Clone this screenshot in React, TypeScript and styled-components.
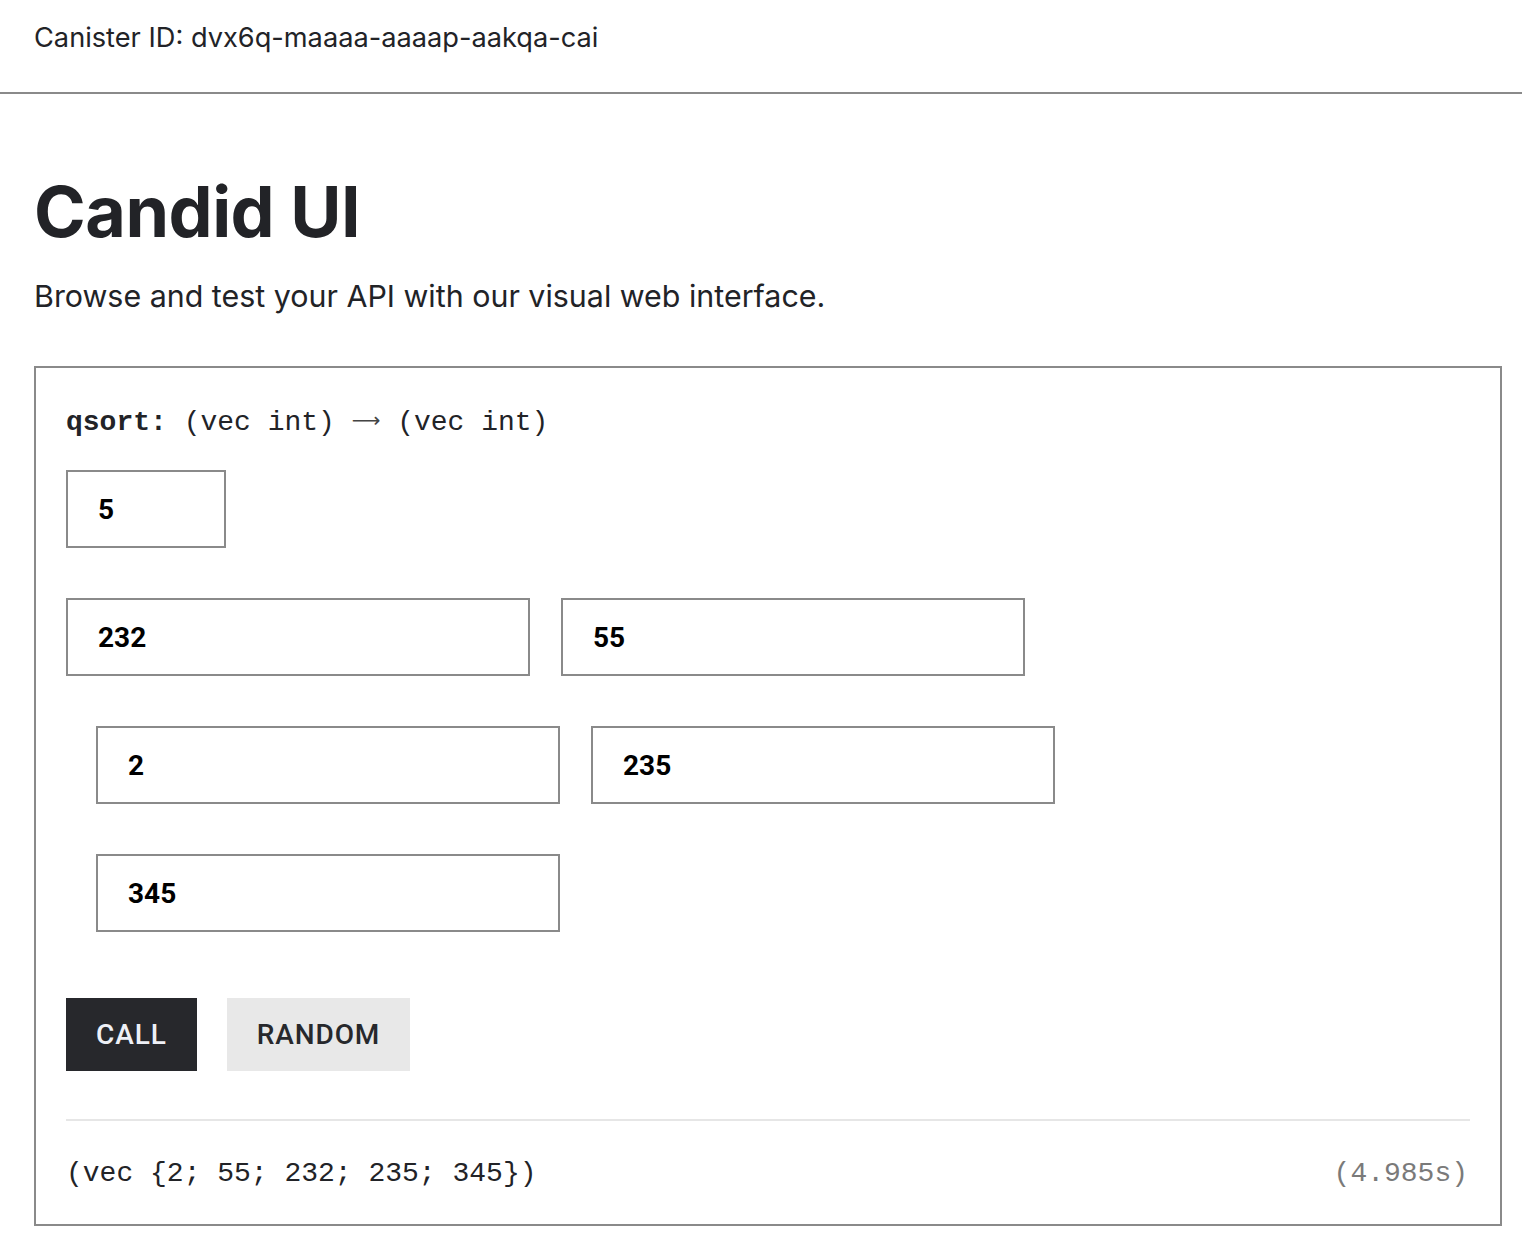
import React from "react";
import styled, { createGlobalStyle } from "styled-components";

const Global = createGlobalStyle`
  html, body { margin: 0; padding: 0; background: #ffffff; }
  body { font-family: Inter, "Noto Sans", sans-serif; color: #222327; }
`;

const Header = styled.header`
  height: 94px;
  box-sizing: border-box;
  padding: 0 34px 18px;
  display: flex;
  align-items: center;
  border-bottom: 2px solid #8a8a8a;
  font-size: 27.2px;
  color: #222327;
`;

const Main = styled.main`
  padding: 76px 20px 0 34px;
`;

const Title = styled.h1`
  margin: 0;
  font-size: 70px;
  font-weight: 700;
  line-height: 84px;
  letter-spacing: -0.5px;
  color: #222327;
`;

const Lead = styled.p`
  margin: 24px 0 52px;
  font-size: 30.4px;
  line-height: 36px;
  color: #222327;
`;

const Card = styled.section`
  border: 2px solid #8a8a8a;
  padding: 30px;
  display: flex;
  flex-direction: column;
`;

const Signature = styled.div`
  font-family: "Liberation Mono", "DejaVu Sans Mono", monospace;
  font-size: 28px;
  line-height: 44px;
  color: #222327;
  margin-bottom: 25px;
  b { font-weight: 700; }
`;

const Arrow = styled.span`
  font-family: "DejaVu Sans", sans-serif;
  font-size: 20px;
  font-weight: 400;
  color: #444;
  display: inline-block;
  margin: 0;
  vertical-align: 3px;
`;

const Row = styled.div<{ $indent?: number }>`
  display: flex;
  gap: 31px;
  padding-left: ${(p) => p.$indent ?? 0}px;
  margin-bottom: 50px;
`;

const Field = styled.div<{ $w: number }>`
  width: ${(p) => p.$w}px;
  height: 78px;
  box-sizing: border-box;
  border: 2px solid #8a8a8a;
  padding-left: 30px;
  display: flex;
  align-items: center;
  font-family: Roboto, Arial, sans-serif;
  font-weight: 700;
  font-size: 28px;
  color: #000;
`;

const Buttons = styled.div`
  display: flex;
  gap: 30px;
  margin-top: 16px;
`;

const Button = styled.button<{ $dark?: boolean }>`
  height: 73px;
  border: none;
  padding: 0 30px;
  font-family: Roboto, Arial, sans-serif;
  font-weight: 500;
  font-size: 28px;
  letter-spacing: 0.9px;
  text-transform: uppercase;
  background: ${(p) => (p.$dark ? "#27282c" : "#e8e8e8")};
  color: ${(p) => (p.$dark ? "#eef0f6" : "#27282c")};
  cursor: pointer;
`;

const Divider = styled.hr`
  border: none;
  border-top: 2px solid #e6e6e6;
  margin: 48px 0 0;
  width: 100%;
`;

const Result = styled.div`
  display: flex;
  justify-content: space-between;
  align-items: center;
  font-family: "Liberation Mono", "DejaVu Sans Mono", monospace;
  font-size: 28px;
  line-height: 40px;
  padding: 33px 2px 0 0;
  color: #222327;
`;

const Time = styled.span`
  color: #7a7a7a;
`;

export default function App() {
  return (
    <>
      <Global />
      <Header>Canister ID: dvx6q-maaaa-aaaap-aakqa-cai</Header>
      <Main>
        <Title>Candid UI</Title>
        <Lead>Browse and test your API with our visual web interface.</Lead>
        <Card>
          <Signature>
            <b>qsort:</b> (vec int) <Arrow>⟶</Arrow> (vec int)
          </Signature>
          <Row>
            <Field $w={160}>5</Field>
          </Row>
          <Row>
            <Field $w={464}>232</Field>
            <Field $w={464}>55</Field>
          </Row>
          <Row $indent={30}>
            <Field $w={464}>2</Field>
            <Field $w={464}>235</Field>
          </Row>
          <Row $indent={30}>
            <Field $w={464}>345</Field>
          </Row>
          <Buttons>
            <Button $dark>Call</Button>
            <Button>Random</Button>
          </Buttons>
          <Divider />
          <Result>
            <span>(vec {"{"}2; 55; 232; 235; 345{"}"})</span>
            <Time>(4.985s)</Time>
          </Result>
        </Card>
      </Main>
    </>
  );
}
